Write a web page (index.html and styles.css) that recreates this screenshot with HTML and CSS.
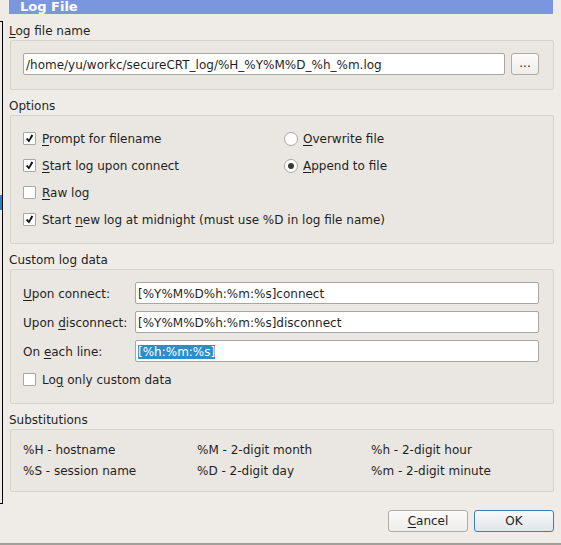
FILE: index.html
```html
<!DOCTYPE html>
<html>
<head>
<meta charset="utf-8">
<link rel="stylesheet" href="styles.css">
</head>
<body>
<div class="dialog">
  <div class="bracket"></div>
  <div class="bracket-mark"></div>
  <div class="titlebar"><span class="title">Log File</span></div>
  <div class="content">
    <div class="group-label"><u>L</u>og file name</div>
    <div class="group box-file">
      <div class="field"><span class="field-text">/home/yu/workc/secureCRT_log/%H_%Y%M%D_%h_%m.log</span></div>
      <div class="btn-browse">...</div>
    </div>

    <div class="group-label">Options</div>
    <div class="group box-options">
      <div class="opt"><span class="check on"><svg viewBox="0 0 13 13" width="13" height="13"><path d="M2.8 6.9 L4.8 6 L5.8 7.8 L8.4 2.6 L10.3 3.4 L6 10.4 Z" fill="#111"/></svg></span><span><u>P</u>rompt for filename</span></div>
      <div class="opt"><span class="radio"></span><span><u>O</u>verwrite file</span></div>
      <div class="opt"><span class="check on"><svg viewBox="0 0 13 13" width="13" height="13"><path d="M2.8 6.9 L4.8 6 L5.8 7.8 L8.4 2.6 L10.3 3.4 L6 10.4 Z" fill="#111"/></svg></span><span><u>S</u>tart log upon connect</span></div>
      <div class="opt"><span class="radio on"><span class="dot"></span></span><span><u>A</u>ppend to file</span></div>
      <div class="opt"><span class="check"></span><span><u>R</u>aw log</span></div>
      <div class="opt"></div>
      <div class="opt wide"><span class="check on"><svg viewBox="0 0 13 13" width="13" height="13"><path d="M2.8 6.9 L4.8 6 L5.8 7.8 L8.4 2.6 L10.3 3.4 L6 10.4 Z" fill="#111"/></svg></span><span>Start <u>n</u>ew log at midnight (must use %D in log file name)</span></div>
    </div>

    <div class="group-label">Custom log data</div>
    <div class="group box-custom">
      <div class="form-row"><span class="form-label"><u>U</u>pon connect:</span><div class="field"><span class="field-text">[%Y%M%D%h:%m:%s]connect</span></div></div>
      <div class="form-row"><span class="form-label">Upon <u>d</u>isconnect:</span><div class="field"><span class="field-text">[%Y%M%D%h:%m:%s]disconnect</span></div></div>
      <div class="form-row"><span class="form-label">On <u>e</u>ach line:</span><div class="field"><span class="field-text"><span class="sel">[%h:%m:%s]</span></span></div></div>
      <div class="opt custom-opt"><span class="check"></span><span>Lo<u>g</u> only custom data</span></div>
    </div>

    <div class="group-label">Substitutions</div>
    <div class="group box-subs">
      <span>%H - hostname</span><span>%M - 2-digit month</span><span>%h - 2-digit hour</span>
      <span>%S - session name</span><span>%D - 2-digit day</span><span>%m - 2-digit minute</span>
    </div>

    <div class="footer">
      <div class="btn"><u>C</u>ancel</div>
      <div class="btn btn-default">OK</div>
    </div>
  </div>
</div>
</body>
</html>
```

FILE: styles.css
```css
* { box-sizing: border-box; }
html, body {
  margin: 0;
  padding: 0;
  background: #efece8;
}
body {
  font-family: "DejaVu Sans", sans-serif;
  font-size: 12px;
  color: #1f1f1f;
}
u { text-decoration-thickness: 1px; text-underline-offset: 2px; }

.dialog {
  position: relative;
  width: 561px;
  height: 545px;
  border-bottom: 2px solid #a3a09b;
}

.bracket {
  position: absolute;
  left: 0;
  top: 21px;
  width: 3px;
  height: 483px;
  border: 1px solid #000;
  border-left: none;
}
.bracket-mark {
  position: absolute;
  left: 0;
  top: 195px;
  width: 2px;
  height: 15px;
  background: #2f7fc4;
}

.titlebar {
  margin-left: 9px;
  width: 544px;
  height: 14px;
  background: #7a97de;
  overflow: hidden;
  padding-left: 11px;
}
.title {
  display: block;
  color: #fff;
  font-weight: bold;
  font-size: 13px;
  line-height: 13px;
}

.content {
  padding: 8px 7px 0 10px;
  display: flex;
  flex-direction: column;
}

.group-label {
  margin-left: -1px;
  line-height: 15px;
  height: 18px;
  padding-top: 2px;
}

.group {
  width: 544px;
  border: 1px solid #d6d2cd;
  border-radius: 2px;
  background: #eae7e2;
  margin-bottom: 7px;
}

.field {
  height: 22px;
  background: #fff;
  border: 1px solid #a9a6a1;
  border-radius: 2px;
  padding-left: 2px;
  padding-top: 1px;
  display: flex;
  align-items: center;
  white-space: nowrap;
  overflow: hidden;
}
.field-text { line-height: 16px; }
.sel { background: #308cc6; color: #fff; }

.box-file {
  display: flex;
  gap: 6px;
  padding: 12px 14px 14px 12px;
}
.box-file .field { flex: 1; }
.btn-browse {
  width: 28px;
  height: 22px;
  border: 1px solid #aeaba6;
  border-radius: 3px;
  background: linear-gradient(#fcfcfb, #efedea);
  text-align: center;
  line-height: 18px;
}

.box-options {
  display: grid;
  grid-template-columns: 261px 1fr;
  grid-auto-rows: 27px;
  padding: 9px 14px 10px 12px;
}
.opt {
  display: flex;
  align-items: center;
  gap: 6px;
  white-space: nowrap;
}
.opt.wide { grid-column: 1 / span 2; }

.check {
  width: 13px;
  height: 13px;
  background: #fff;
  border: 1px solid #aaa7a2;
  border-radius: 1px;
  position: relative;
  flex: none;
}
.check svg {
  position: absolute;
  left: -1px;
  top: -1px;
}
.radio {
  width: 14px;
  height: 14px;
  border-radius: 50%;
  background: #fff;
  border: 1px solid #a9a6a1;
  flex: none;
  display: flex;
  align-items: center;
  justify-content: center;
  margin-right: -1px;
}
.dot {
  width: 6px;
  height: 6px;
  border-radius: 50%;
  background: #3a3a3a;
}

.box-custom {
  display: flex;
  flex-direction: column;
  gap: 7px;
  padding: 12px 14px 14px 12px;
}
.form-row {
  display: flex;
  align-items: center;
}
.form-label {
  width: 112px;
  flex: none;
  white-space: nowrap;
  padding-top: 1px;
}
.form-row .field { flex: 1; }
.custom-opt { height: 20px; padding-top: 1px; }

.box-subs {
  display: grid;
  grid-template-columns: 174px 174px 1fr;
  grid-auto-rows: 21px;
  line-height: 21px;
  padding: 10px 14px 9px 12px;
  margin-bottom: 0;
}

.footer {
  display: flex;
  justify-content: flex-end;
  gap: 6px;
  margin-top: 18px;
  width: 544px;
}
.btn {
  width: 80px;
  height: 22px;
  border: 1px solid #aeaba6;
  border-radius: 3px;
  background: linear-gradient(#fbfbfa, #eeece9);
  text-align: center;
  line-height: 20px;
}
.btn-default {
  border-color: #3f7eb5;
  background: linear-gradient(#f7f8f9, #e1e6eb);
}
```
